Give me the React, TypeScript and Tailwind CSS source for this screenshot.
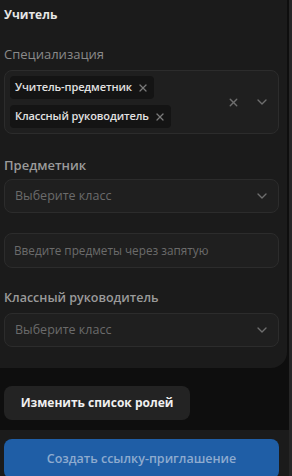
import { X, ChevronDown } from 'lucide-react';

const chips = ['Учитель-предметник', 'Классный руководитель'];

function SelectBox({ placeholder }: { placeholder: string }) {
  return (
    <div className="flex h-[34px] items-center justify-between rounded-lg border border-[#2c2c2c] bg-[#1f1f1f] pl-[10px] pr-[8px]">
      <span className="text-[12.5px] text-[#6b6b6b]">{placeholder}</span>
      <ChevronDown size={16} strokeWidth={2} className="text-[#6e6e6e]" />
    </div>
  );
}

export default function App() {
  return (
    <div
      className="flex h-[476px] w-[292px] overflow-hidden bg-[#0e0e0e]"
      style={{ fontFamily: '"Open Sans", "Noto Sans", sans-serif' }}
    >
      <div className="flex w-[289px] flex-col">
        {/* Role card */}
        <div className="flex w-[287px] flex-col rounded-br-2xl bg-[#1b1b1b] pb-[21px] pl-[4px] pr-[8px] pt-[6px]">
          <h3 className="text-[12px] font-bold leading-[18px] text-[#e6e6e6]">Учитель</h3>

          <label className="mt-[20px] text-[13px] leading-[20px] text-[#8a8a8a]">Специализация</label>
          <div className="mt-[6px] flex items-center rounded-lg border border-[#2c2c2c] bg-[#1f1f1f] px-[5px] py-[5px]">
            <div className="flex flex-1 flex-col items-start gap-[6px]">
              {chips.map(chip => (
                <span
                  key={chip}
                  className="flex h-[23px] items-center gap-[5px] rounded bg-[#141414] pl-[5px] pr-[5px] text-[11px] font-semibold tracking-[-0.1px] text-[#e2e2e2]"
                >
                  {chip}
                  <X size={12} strokeWidth={2.5} className="text-[#7a7a7a]" />
                </span>
              ))}
            </div>
            <X size={13} strokeWidth={2.5} className="mr-[14px] text-[#6e6e6e]" />
            <ChevronDown size={16} strokeWidth={2} className="mr-[3px] text-[#6e6e6e]" />
          </div>

          <label className="mt-[22px] text-[13px] font-semibold leading-[18px] text-[#9a9a9a]">Предметник</label>
          <div className="mt-[5px]">
            <SelectBox placeholder="Выберите класс" />
          </div>
          <div className="mt-[20px] flex h-[35px] items-center rounded-lg border border-[#2c2c2c] bg-[#1f1f1f] px-[9px]">
            <span className="text-[11.75px] text-[#6b6b6b]">Введите предметы через запятую</span>
          </div>

          <label className="mt-[21px] text-[12.5px] font-semibold leading-[18px] text-[#9a9a9a]">Классный руководитель</label>
          <div className="mt-[6px]">
            <SelectBox placeholder="Выберите класс" />
          </div>
        </div>

        {/* Edit roles */}
        <div className="px-[4px] pt-[18px]">
          <button
            type="button"
            className="h-[34px] w-[186px] rounded-lg bg-[#232323] text-[12px] font-bold text-[#f0f0f0]"
          >
            Изменить список ролей
          </button>
        </div>

        {/* Footer */}
        <div className="mt-[10px] flex-1 bg-[#1b1b1b] px-[4px] pt-[9px]">
          <button
            type="button"
            className="h-[40px] w-[275px] rounded-lg bg-[#1f5ea6] text-[12.5px] font-semibold text-[#8eabcf]"
          >
            Создать ссылку-приглашение
          </button>
        </div>
      </div>
      <div className="w-[3px] bg-[#262626]" />
    </div>
  );
}
